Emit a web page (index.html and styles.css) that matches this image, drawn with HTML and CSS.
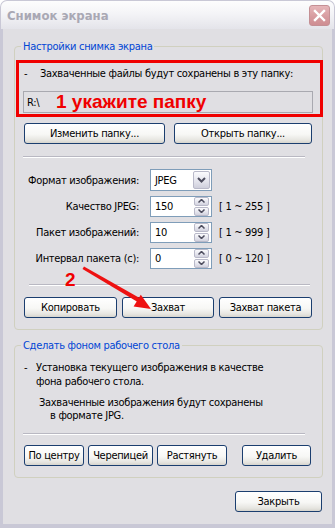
FILE: index.html
```html
<!DOCTYPE html>
<html lang="ru">
<head>
<meta charset="utf-8">
<title>Снимок экрана</title>
<link rel="stylesheet" href="styles.css">
</head>
<body>
<div class="window">
  <div class="titlebar">
    <span class="title">Снимок экрана</span>
    <span class="close"><svg width="13" height="13" viewBox="0 0 13 13"><path d="M2 2 L11 11 M11 2 L2 11" stroke="#fff" stroke-width="2.4" stroke-linecap="square"/></svg></span>
  </div>
  <div class="frame">
    <fieldset class="group g1">
      <legend>Настройки снимка экрана</legend>
      <div class="annot">
        <div class="note"><span class="dash">-</span><span>Захваченные файлы будут сохранены в эту папку:</span></div>
        <div class="path"><span class="drive">R:\</span><span class="hint">1 укажите папку</span></div>
      </div>
      <div class="btnrow two">
        <button class="btn">Изменить папку...</button>
        <button class="btn">Открыть папку...</button>
      </div>
      <hr class="sep sep1">
      <div class="form">
        <label class="lbl">Формат изображения:</label>
        <div class="combo"><span class="val">JPEG</span><span class="drop"><svg width="9" height="6" viewBox="0 0 9 6"><path d="M1 1 L4.5 4.5 L8 1" fill="none" stroke="#4d4d5e" stroke-width="2"/></svg></span></div>
        <span></span>
        <label class="lbl">Качество JPEG:</label>
        <div class="spin"><span class="val">150</span><span class="arrows"><span class="sb"><svg width="7" height="4" viewBox="0 0 7 4"><path d="M0.5 3.5 L3.5 0.5 L6.5 3.5" fill="none" stroke="#4d4d5e" stroke-width="1.5"/></svg></span><span class="sb"><svg width="7" height="4" viewBox="0 0 7 4"><path d="M0.5 0.5 L3.5 3.5 L6.5 0.5" fill="none" stroke="#4d4d5e" stroke-width="1.5"/></svg></span></span></div>
        <span class="range">[ 1 ~ 255 ]</span>
        <label class="lbl">Пакет изображений:</label>
        <div class="spin"><span class="val">10</span><span class="arrows"><span class="sb"><svg width="7" height="4" viewBox="0 0 7 4"><path d="M0.5 3.5 L3.5 0.5 L6.5 3.5" fill="none" stroke="#4d4d5e" stroke-width="1.5"/></svg></span><span class="sb"><svg width="7" height="4" viewBox="0 0 7 4"><path d="M0.5 0.5 L3.5 3.5 L6.5 0.5" fill="none" stroke="#4d4d5e" stroke-width="1.5"/></svg></span></span></div>
        <span class="range">[ 1 ~ 999 ]</span>
        <label class="lbl">Интервал пакета (с):</label>
        <div class="spin"><span class="val">0</span><span class="arrows"><span class="sb"><svg width="7" height="4" viewBox="0 0 7 4"><path d="M0.5 3.5 L3.5 0.5 L6.5 3.5" fill="none" stroke="#4d4d5e" stroke-width="1.5"/></svg></span><span class="sb"><svg width="7" height="4" viewBox="0 0 7 4"><path d="M0.5 0.5 L3.5 3.5 L6.5 0.5" fill="none" stroke="#4d4d5e" stroke-width="1.5"/></svg></span></span></div>
        <span class="range">[ 0 ~ 120 ]</span>
      </div>
      <hr class="sep sep2">
      <div class="btnrow three">
        <button class="btn">Копировать</button>
        <button class="btn">Захват</button>
        <button class="btn">Захват пакета</button>
      </div>
    </fieldset>
    <fieldset class="group g2">
      <legend>Сделать фоном рабочего стола</legend>
      <div class="para1">
        <span class="dash2">-</span>
        <span class="ptext">Установка текущего изображения в качестве<br>фона рабочего стола.</span>
      </div>
      <div class="para2">
        <div class="l1">Захваченные изображения будут сохранены</div>
        <div class="l2">в формате JPG.</div>
      </div>
      <hr class="sep sep3">
      <div class="btnrow four">
        <button class="btn b-center">По центру</button>
        <button class="btn b-tile">Черепицей</button>
        <button class="btn b-stretch">Растянуть</button>
        <button class="btn b-del">Удалить</button>
      </div>
    </fieldset>
    <div class="footer">
      <button class="btn b-close">Закрыть</button>
    </div>
  </div>
  <svg class="arrow" width="335" height="528" viewBox="0 0 335 528">
    <polygon points="82.5,269 84,266.6 140.5,298.4 138.5,302.6" fill="#ee1111"/>
    <polygon points="151,309 133.6,306.5 140.8,294.8" fill="#ee1111"/>
  </svg>
  <span class="num2">2</span>
</div>
</body>
</html>
```

FILE: styles.css
```css
* { box-sizing: border-box; }
body { margin: 0; background: #ffffff; }

.window {
  position: relative;
  width: 335px;
  height: 528px;
  font-family: "DejaVu Sans Condensed", "DejaVu Sans", sans-serif;
  font-size: 11px;
  letter-spacing: -0.3px;
  color: #000;
}

.titlebar {
  height: 29px;
  display: flex;
  align-items: flex-start;
  justify-content: space-between;
  background: linear-gradient(#fdfdfd, #f4f4f7 45%, #e4e4ea);
  border: 1px solid #c9c8d6;
  border-bottom: 0;
  border-radius: 7px 7px 0 0;
}
.title {
  margin: 7px 0 0 6px;
  font-size: 13px;
  font-weight: bold;
  line-height: 16px;
  letter-spacing: 0;
  color: #a9a8b4;
}
.close {
  margin: 4px 4px 0 0;
  width: 21px;
  height: 21px;
  display: flex;
  align-items: center;
  justify-content: center;
  border: 1px solid #c48f94;
  border-radius: 3px;
  background: linear-gradient(#e6b6b9, #d69a9e 60%, #cf8e93);
}

.frame {
  height: 499px;
  background: #e0dfe3;
  border: 3px solid #c9c8d6;
  border-top: 0;
  border-bottom-width: 4px;
  padding-top: 11px;
}

.group {
  margin: 0 9px 0 11px;
  padding: 0 10px 11px 9px;
  border: 1px solid #d0d0bf;
  border-radius: 4px;
  min-width: 0;
}
.group legend {
  margin-left: -3px;
  padding: 0 2px;
  color: #0046d5;
  line-height: 13px;
}

.annot {
  margin: 7px -11px 0 -8px;
  border: 3px solid #f00000;
  padding: 4px 7px 1px 4px;
}
.note {
  display: flex;
  line-height: 13px;
  padding-left: 1px;
}
.note .dash { width: 16px; }
.path {
  margin-top: 11px;
  height: 22px;
  border: 1px solid #a9a9b0;
  display: flex;
  align-items: center;
  padding-left: 3px;
}
.drive { width: 29px; }
.hint {
  font-family: "Liberation Sans", Arial, sans-serif;
  font-weight: bold;
  font-size: 19px;
  letter-spacing: 0;
  color: #f00000;
  line-height: 20px;
}

.btn {
  font: inherit;
  letter-spacing: inherit;
  color: #000;
  height: 21px;
  padding: 0;
  border: 1px solid #1b3e6f;
  border-radius: 3px;
  background: linear-gradient(#ffffff, #f7f7f5 55%, #e6e5e0 85%, #d6d4cd);
  line-height: 17px;
  text-align: center;
  white-space: nowrap;
}

.btnrow { display: grid; }
.two {
  margin-top: 6px;
  grid-template-columns: 141px 138px;
  column-gap: 9px;
}
.three {
  margin-top: 11px;
  grid-template-columns: 93px 92px 93px;
  column-gap: 5px;
}
.four {
  margin-top: 10px;
  display: flex;
}
.b-center { width: 60px; }
.b-tile { width: 65px; margin-left: 4px; }
.b-stretch { width: 70px; margin-left: 4px; }
.b-del { width: 69px; margin-left: 15px; }

.sep {
  border: 0;
  height: 2px;
  margin: 0;
  background: linear-gradient(#b9b8c2 50%, #ffffff 50%);
}
.sep1 { margin: 12px 0 0 -1px; width: 282px; }
.sep2 { margin: 15px 0 0 5px; width: 281px; }
.sep3 { margin: 11px 0 0 -1px; width: 282px; }

.form {
  margin-top: 11px;
  display: grid;
  grid-template-columns: 115px 62px auto;
  grid-auto-rows: 22px;
  column-gap: 11px;
  row-gap: 4px;
  align-items: center;
}
.lbl { text-align: right; white-space: nowrap; }
.range { margin-left: -4px; white-space: nowrap; }

.combo, .spin {
  height: 22px;
  border: 1px solid #7f9db9;
  background: #fff;
  display: flex;
  align-items: center;
  justify-content: space-between;
  padding: 0 1px 0 4px;
}
.spin { height: 21px; padding-right: 1px; }
.drop {
  width: 17px;
  height: 18px;
  display: flex;
  align-items: center;
  justify-content: center;
  border: 1px solid #b9b9c9;
  border-radius: 2px;
  background: linear-gradient(#fbfbfd, #e3e3ec 60%, #cfcfdc);
}
.arrows {
  display: flex;
  flex-direction: column;
  gap: 1px;
  margin-right: 1px;
}
.sb {
  width: 15px;
  height: 9px;
  display: flex;
  align-items: center;
  justify-content: center;
  border: 1px solid #b9b9c9;
  border-radius: 2px;
  background: linear-gradient(#fbfbfd, #e3e3ec 60%, #d2d2de);
}

.g2 { margin-top: 9px; }
.para1 {
  margin-top: 9px;
  display: flex;
  line-height: 14px;
}
.dash2 { width: 12px; }
.para2 {
  margin-top: 7px;
  line-height: 13px;
}
.para2 .l1 { padding-left: 15px; }
.para2 .l2 { padding-left: 26px; }

.footer {
  margin-top: 13px;
  display: flex;
  justify-content: flex-end;
  padding-right: 10px;
}
.b-close { width: 87px; }

.arrow {
  position: absolute;
  left: 0;
  top: 0;
  pointer-events: none;
}
.num2 {
  position: absolute;
  left: 65px;
  top: 270px;
  font-family: "Liberation Sans", Arial, sans-serif;
  font-weight: bold;
  font-size: 19px;
  line-height: 20px;
  letter-spacing: 0;
  color: #f00000;
}
```
